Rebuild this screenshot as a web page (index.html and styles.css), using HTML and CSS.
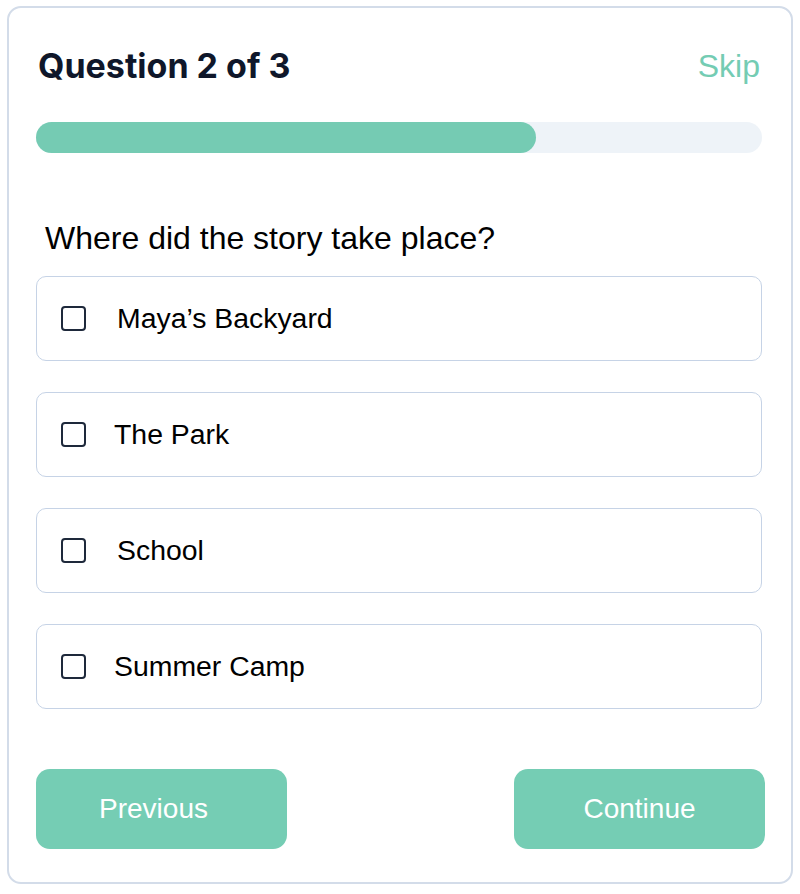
FILE: index.html
```html
<!DOCTYPE HTML>
<html>
<head>
  <meta charset="UTF-8">
  <title>Quiz</title>
  <meta name="viewport" content="width=device-width, initial-scale=1">
  <link rel="stylesheet" href="styles.css">
</head>
<body>
  <div class="card">
    <div class="top">
      <h1>Question 2 of 3</h1>
      <a href="#" class="skip">Skip</a>
    </div>
    <div class="progress"><div class="fill"></div></div>

    <p class="question">Where did the story take place?</p>

    <div class="options">
      <label class="option"><span class="box"></span><span class="txt">Maya&rsquo;s Backyard</span></label>
      <label class="option"><span class="box"></span><span class="txt t2">The Park</span></label>
      <label class="option"><span class="box"></span><span class="txt">School</span></label>
      <label class="option"><span class="box"></span><span class="txt t2">Summer Camp</span></label>
    </div>

    <div class="btns">
      <button class="btn prev">Previous</button>
      <button class="btn">Continue</button>
    </div>
  </div>
</body>
</html>
```

FILE: styles.css
```css
body { margin: 0; padding: 0; background: #fff; font-family: "Liberation Sans", Arial, sans-serif; }

.card {
  margin: 6px 7px;
  width: 786px;
  height: 878px;
  box-sizing: border-box;
  border: 2px solid #d3dce9;
  border-radius: 14px;
  padding: 38px 29px 0 27px;
}

.top { display: flex; justify-content: space-between; align-items: center; height: 40px; padding-left: 2px; }
h1 { margin: 0; font-family: Inter, sans-serif; font-weight: 700; font-size: 34px; color: #0f172a; line-height: 40px; }
.skip { color: #74ccb3; font-size: 32px; text-decoration: none; line-height: 40px; margin-right: 2px; }

.progress { margin-top: 36px; height: 31px; background: #eef3f8; border-radius: 16px; }
.progress .fill { width: 500px; height: 100%; background: #75cbb3; border-radius: 16px; }

.question { margin: 68px 0 21px 9px; font-size: 32px; line-height: 34px; color: #000; }

.options { display: flex; flex-direction: column; gap: 31px; }
.option {
  display: flex;
  align-items: center;
  height: 85px;
  box-sizing: border-box;
  border: 1.5px solid #c6d3e6;
  border-radius: 10px;
  padding-left: 24px;
  font-size: 28.4px;
  color: #000;
}
.box { width: 25px; height: 25px; box-sizing: border-box; border: 2px solid #1e293b; border-radius: 4px; flex: none; }
.txt { margin-left: 31px; }
.txt.t2 { margin-left: 28px; }

.btns { display: flex; justify-content: space-between; margin-top: 60px; margin-right: -3px; }
.btn {
  width: 251px;
  height: 80px;
  border: none;
  border-radius: 14px;
  background: #75cdb4;
  color: #fff;
  font-family: "Liberation Sans", Arial, sans-serif;
  font-size: 28px;
  cursor: pointer;
}
.btn.prev { padding-right: 22px; }
```
